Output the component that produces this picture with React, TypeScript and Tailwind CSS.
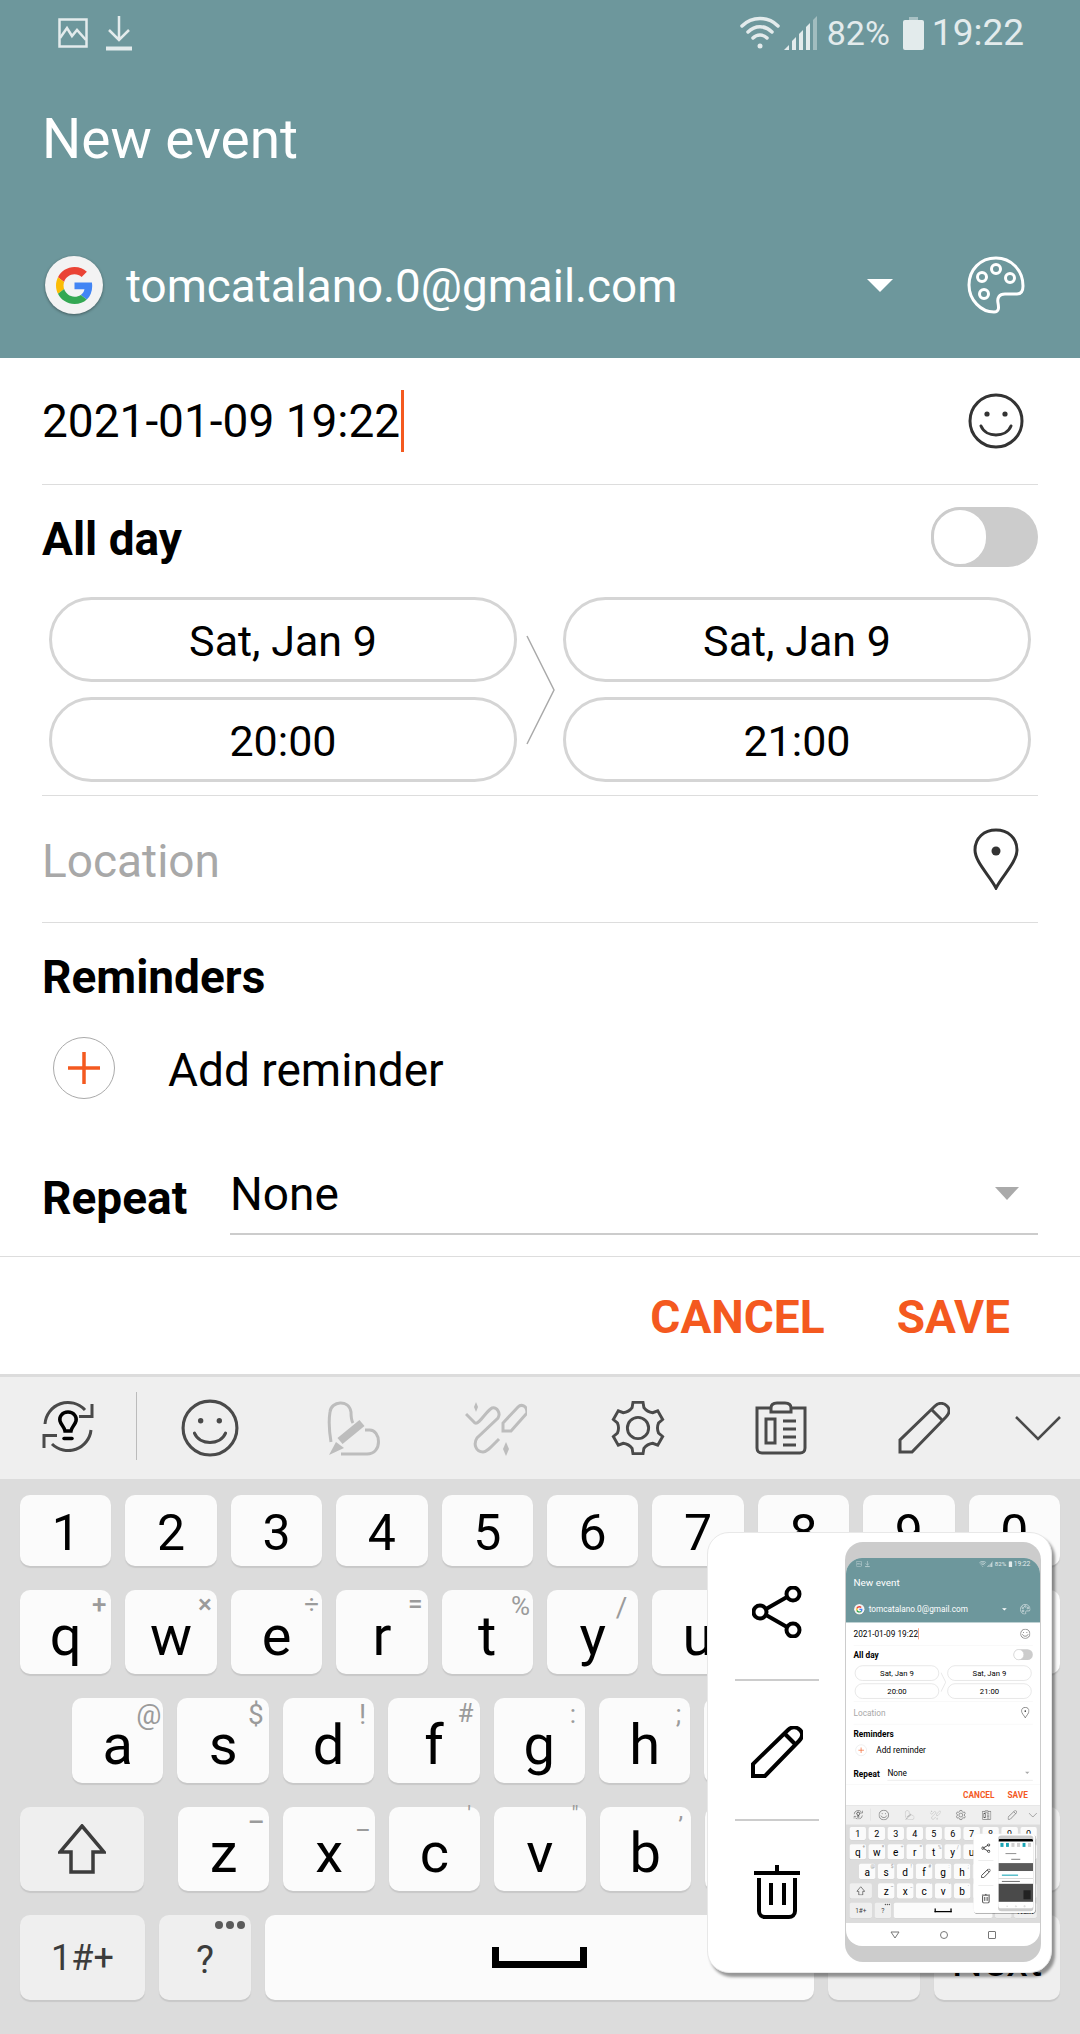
// Samsung calendar "New event" screen with the screenshot popup over the keyboard
const ORANGE = '#f4591f';

const gearPath = (() => {
  const pts: string[] = [];
  const c = 30;
  for (let i = 0; i < 6; i++) {
    const a = (i * 60 - 90) * (Math.PI / 180);
    const p = (r: number, off: number) => {
      const t = a + (off * Math.PI) / 180;
      return `${(c + r * Math.cos(t)).toFixed(1)} ${(c + r * Math.sin(t)).toFixed(1)}`;
    };
    const next = a + Math.PI / 6;
    const ctrl = `${(c + 19 * Math.cos(next)).toFixed(1)} ${(c + 19 * Math.sin(next)).toFixed(1)}`;
    pts.push(`${i === 0 ? 'M' : 'L'}${p(27, -11)} L${p(27, 11)} L${p(22, 16)} Q${ctrl} ${p(22, 44)}`);
  }
  return pts.join(' ') + ' Z';
})();

function StatusIcons() {
  return (
    <>
      <svg width="30" height="30" viewBox="0 0 30 30" fill="none" stroke="#e3ebec" strokeWidth="2.5">
        <rect x="1.5" y="1.5" width="27" height="27" />
        <path d="M2 20 L9 10 L14 18 L19 12 L28 22" />
      </svg>
      <svg width="30" height="36" viewBox="0 0 30 36" fill="none" stroke="#e3ebec" strokeWidth="2.5" className="ml-[16px]">
        <path d="M15 1 V25 M5 15 L15 25 L25 15" />
        <path d="M2 33.5 H28" strokeWidth="4" />
      </svg>
    </>
  );
}

function Wifi() {
  return (
    <svg width="40" height="36" viewBox="0 0 40 36" fill="none" stroke="#e3ebec" strokeWidth="3.5" strokeLinecap="round">
      <path d="M2 11 C12 1 28 1 38 11" />
      <path d="M8 17 C15 10 25 10 32 17" />
      <path d="M13 23 C17 19 23 19 27 23" />
      <circle cx="20" cy="31" r="2.5" fill="#e3ebec" stroke="none" />
    </svg>
  );
}

function Signal() {
  return (
    <svg width="33" height="34" viewBox="0 0 33 34" fill="#e3ebec">
      <path d="M0 34 L5 29 V34 Z" />
      <path d="M8 25 L12 21 V34 H8 Z" />
      <path d="M15 18 L19 14 V34 H15 Z" />
      <path d="M22 11 L26 7 V34 H22 Z" />
      <path d="M29 4 L33 0 V34 H29 Z" opacity="0.45" />
    </svg>
  );
}

function Battery() {
  return (
    <svg width="21" height="33" viewBox="0 0 21 33" fill="#e3ebec">
      <path d="M6 0 H15 V3 H6 Z" opacity="0.5" />
      <rect x="0" y="3" width="21" height="30" rx="2" />
    </svg>
  );
}

function GoogleBadge() {
  return (
    <div className="flex h-[58px] w-[58px] items-center justify-center rounded-full bg-[#f3f3f3] shadow-[0_1px_3px_rgba(0,0,0,0.4)]">
      <svg width="37" height="37" viewBox="0 0 48 48">
        <path fill="#EA4335" d="M24 9.5c3.54 0 6.71 1.22 9.21 3.6l6.85-6.85C35.9 2.38 30.47 0 24 0 14.62 0 6.51 5.38 2.56 13.22l7.98 6.19C12.43 13.72 17.74 9.5 24 9.5z" />
        <path fill="#4285F4" d="M46.98 24.55c0-1.57-.15-3.09-.38-4.55H24v9.02h12.94c-.58 2.96-2.26 5.48-4.78 7.18l7.73 6c4.51-4.18 7.09-10.36 7.09-17.65z" />
        <path fill="#FBBC05" d="M10.53 28.59c-.48-1.45-.76-2.99-.76-4.59s.27-3.14.76-4.59l-7.98-6.19C.92 16.46 0 20.12 0 24c0 3.88.92 7.54 2.56 10.78l7.97-6.19z" />
        <path fill="#34A853" d="M24 48c6.48 0 11.93-2.13 15.89-5.81l-7.73-6c-2.15 1.45-4.92 2.3-8.16 2.3-6.26 0-11.57-4.22-13.47-9.91l-7.98 6.19C6.51 42.62 14.62 48 24 48z" />
      </svg>
    </div>
  );
}

function Palette() {
  return (
    <svg width="58" height="58" viewBox="0 0 58 58" fill="none" stroke="#fff" strokeWidth="3">
      <path d="M29 2 C13 2 2 14 2 29 C2 44 14 56 27 56 C32 56 32 52 31 47 C30 42 32 38 38 38 L50 38 C54 38 56 35 56 30 C56 14 44 2 29 2 Z" />
      <circle cx="15" cy="21" r="4.5" />
      <circle cx="29" cy="13" r="4.5" />
      <circle cx="43" cy="22" r="4.5" />
      <circle cx="17" cy="38" r="4.5" />
    </svg>
  );
}

function Smile({ size, color, w }: { size: number; color: string; w: number }) {
  return (
    <svg width={size} height={size} viewBox="0 0 56 56" fill="none" stroke={color} strokeWidth={w}>
      <circle cx="28" cy="28" r="26" />
      <circle cx="19" cy="21" r="2.6" fill={color} stroke="none" />
      <circle cx="37" cy="21" r="2.6" fill={color} stroke="none" />
      <path d="M13 33 C18 45 38 45 43 33" strokeLinecap="round" />
    </svg>
  );
}

function Pin() {
  return (
    <svg width="46" height="62" viewBox="0 0 46 62" fill="none" stroke="#333" strokeWidth="3">
      <path d="M23 60 C17 48 2 34 2 22 C2 10 11 2 23 2 C35 2 44 10 44 22 C44 34 29 48 23 60 Z" />
      <circle cx="23" cy="23" r="4.5" fill="#333" stroke="none" />
    </svg>
  );
}

function SyncBulb() {
  return (
    <svg width="52" height="52" viewBox="0 0 52 52" fill="none" stroke="#4a4a4a" strokeWidth="3">
      <path d="M3 24 A23 23 0 0 1 43 10" />
      <path d="M37 16.5 H50 V4" />
      <path d="M49 30 A23 23 0 0 1 10 44" />
      <path d="M15 35.5 H2 V48" />
      <path d="M26 12 C20 12 17 17 18 21 C19 25 22.5 27 23 31 H29 C29.5 27 33 25 34 21 C35 17 32 12 26 12 Z" stroke="#000" strokeWidth="3.5" />
      <path d="M22 38.5 H30" stroke="#000" strokeWidth="3.5" strokeLinecap="round" />
    </svg>
  );
}

function Handwriting() {
  return (
    <svg width="54" height="56" viewBox="0 0 54 56" fill="none" stroke="#bdbdbd" strokeWidth="3">
      <path d="M4 42 C2 30 2 18 3 12 C4 1 22 -1 24 12 C24 16 24 20 26 23" />
      <path d="M38 30 H42 C54 29 56 54 40 54 H14" />
      <path d="M13 41 L35 23" strokeWidth="8" />
      <path d="M2 55 L9 42 L17 48 Z" fill="#bdbdbd" stroke="none" />
    </svg>
  );
}

function Stickers() {
  return (
    <svg width="62" height="56" viewBox="0 0 62 56" fill="none" stroke="#bdbdbd" strokeWidth="3">
      <path d="M1 14 L10 23 C14 25 22 10 27 8 C32 7 36 13 33 18 L12 38 C8 44 11 52 18 52 C22 52 26 47 34 39" />
      <path d="M38 31 H46 L62 13 C62 5 56 4 53 7 L38 23 Z" />
      <path d="M11 2 L13 7 L11 12 L9 7 Z" fill="#bdbdbd" stroke="none" />
      <path d="M41 42 L44 49 L41 56 L38 49 Z" fill="#bdbdbd" stroke="none" />
    </svg>
  );
}

function Gear() {
  return (
    <svg width="58" height="58" viewBox="0 0 60 60" fill="none" stroke="#4a4a4a" strokeWidth="3">
      <path d={gearPath} />
      <circle cx="30" cy="30" r="11" />
    </svg>
  );
}

function Clipboard() {
  return (
    <svg width="52" height="54" viewBox="0 0 52 54" fill="none" stroke="#4a4a4a" strokeWidth="3">
      <path d="M15 7 H2 V47 C2 50 4 52 7 52 H45 C48 52 50 50 50 47 V7 H37" />
      <path d="M16 11 V7 C16 3 19 2 22 2 H30 C33 2 36 3 36 7 V11 Z" />
      <rect x="11" y="18" width="9" height="24" />
      <path d="M28 20 H41 M28 28 H41 M28 36 H41 M28 44 H41" strokeWidth="3" />
    </svg>
  );
}

function Pencil({ size, color, w }: { size: number; color: string; w: number }) {
  return (
    <svg width={size} height={size} viewBox="0 0 52 52" fill="none" stroke={color} strokeWidth={w}>
      <path d="M2 50 V38 L37 4 C41 0 46 1 49 4 C52 7 52 11 48 15 L14 50 Z" />
      <path d="M34 8 L44 18" />
    </svg>
  );
}

function Share() {
  return (
    <svg width="50" height="52" viewBox="0 0 50 52" fill="none" stroke="#000" strokeWidth="4">
      <circle cx="8" cy="26" r="6.5" />
      <circle cx="41" cy="8" r="6.5" />
      <circle cx="41" cy="44" r="6.5" />
      <path d="M14 23 L35 11 M14 29 L35 41" />
    </svg>
  );
}

function Trash() {
  return (
    <svg width="46" height="54" viewBox="0 0 46 54" fill="none" stroke="#000" strokeWidth="4">
      <path d="M0 8 H46 M23 0 V8" />
      <path d="M5 13 V46 C5 50 8 52 11 52 H35 C38 52 41 50 41 46 V13" />
      <path d="M17 18 V40 M30 18 V40" />
    </svg>
  );
}

type Hint = { h: string; c: string };
const Q_ROW: [string, Hint?][] = [
  ['q', { h: '+', c: 'right-[5px] top-[-1px] text-[26px] font-medium' }],
  ['w', { h: '×', c: 'right-[5px] top-[-1px] text-[26px] font-medium' }],
  ['e', { h: '÷', c: 'right-[3px] top-[-1px] text-[26px]' }],
  ['r', { h: '=', c: 'right-[5px] top-[-1px] text-[26px] font-medium' }],
  ['t', { h: '%', c: 'right-[3px] top-[1px] text-[26px]' }],
  ['y', { h: '/', c: 'right-[11px] top-[1px] text-[28px]' }],
  ['u'], ['i'], ['o'], ['p'],
];
const A_ROW: [string, Hint?][] = [
  ['a', { h: '@', c: 'right-[2px] top-[0px] text-[28px]' }],
  ['s', { h: '$', c: 'right-[5px] top-[0px] text-[28px]' }],
  ['d', { h: '!', c: 'right-[8px] top-[0px] text-[28px]' }],
  ['f', { h: '#', c: 'right-[6px] top-[0px] text-[26px]' }],
  ['g', { h: ':', c: 'right-[9px] top-[1px] text-[26px]' }],
  ['h', { h: ';', c: 'right-[9px] top-[1px] text-[26px]' }],
  ['j'], ['k'], ['l'],
];
const Z_ROW: [string, Hint?][] = [
  ['z', { h: '–', c: 'right-[5px] top-[0px] text-[26px] font-medium' }],
  ['x', { h: '_', c: 'right-[6px] top-[-2px] text-[26px]' }],
  ['c', { h: "'", c: 'right-[9px] top-[-6px] text-[22px]' }],
  ['v', { h: '"', c: 'right-[7px] top-[-6px] text-[22px]' }],
  ['b', { h: '’', c: 'right-[8px] top-[5px] text-[24px]' }],
  ['n'], ['m'],
];

function Key({ label, hint, className }: { label: string; hint?: Hint; className?: string }) {
  return (
    <div className={`relative flex items-end justify-center rounded-[10px] bg-[#fbfbfb] pb-[10px] text-[56px] leading-none text-black shadow-[0_2px_1px_#c8c8c8] ${className ?? 'w-[91.4px]'}`}>
      {label}
      {hint && <span className={`absolute leading-[1.2] text-[#9b9b9b] ${hint.c}`}>{hint.h}</span>}
    </div>
  );
}

function Keyboard() {
  return (
    <div className="flex h-[555px] flex-col gap-[24px] bg-[#dcdcdc] px-[20px] pt-[16px]">
      <div className="flex h-[71px] gap-[14px]">
        {'1234567890'.split('').map((d) => (
          <div key={d} className="flex w-[91.4px] items-center justify-center rounded-[10px] bg-[#fbfbfb] pt-[5px] text-[50px] leading-none text-black shadow-[0_2px_1px_#c8c8c8]">
            {d}
          </div>
        ))}
      </div>
      <div className="flex h-[84px] gap-[14px]">
        {Q_ROW.map(([l, h]) => <Key key={l} label={l} hint={h} />)}
      </div>
      <div className="flex h-[85px] gap-[14px] pl-[52px]">
        {A_ROW.map(([l, h]) => <Key key={l} label={l} hint={h} />)}
      </div>
      <div className="flex h-[84px] gap-[14px]">
        <div className="mr-[20px] flex w-[124px] items-center justify-center rounded-[10px] bg-[#efefef] shadow-[0_2px_1px_#c8c8c8]">
          <svg width="48" height="50" viewBox="0 0 48 50" fill="none" stroke="#3c3c3c" strokeWidth="3.5">
            <path d="M24 2 L46 28 H35 V48 H13 V28 H2 Z" />
          </svg>
        </div>
        {Z_ROW.map(([l, h]) => <Key key={l} label={l} hint={h} />)}
        <div className="flex-1 rounded-[10px] bg-[#efefef] shadow-[0_2px_1px_#c8c8c8]" />
      </div>
      <div className="flex h-[85px] gap-[14px]">
        <div className="flex w-[125px] items-center justify-center rounded-[10px] bg-[#efefef] text-[36px] text-[#3c3c3c] shadow-[0_2px_1px_#c8c8c8]">1#+</div>
        <div className="relative flex w-[92px] items-center justify-center rounded-[10px] bg-[#efefef] pt-[6px] text-[38px] text-[#3c3c3c] shadow-[0_2px_1px_#c8c8c8]">
          ?
          <span className="absolute right-[6px] top-[6px] flex gap-[3px]">
            <i className="h-[8px] w-[8px] rounded-full bg-[#5c5c5c]" />
            <i className="h-[8px] w-[8px] rounded-full bg-[#5c5c5c]" />
            <i className="h-[8px] w-[8px] rounded-full bg-[#5c5c5c]" />
          </span>
        </div>
        <div className="flex w-[549px] items-center justify-center rounded-[10px] bg-[#fbfbfb] shadow-[0_2px_1px_#c8c8c8]">
          <div className="h-[21px] w-[95px] border-x-[7px] border-b-[7px] border-black" />
        </div>
        <div className="flex w-[92px] items-center justify-center rounded-[10px] bg-[#efefef] text-[40px] text-black shadow-[0_2px_1px_#c8c8c8]">.</div>
        <div className="flex flex-1 items-center justify-center rounded-[10px] bg-[#efefef] pt-[6px] text-[44px] text-black shadow-[0_2px_1px_#c8c8c8]">Next</div>
      </div>
    </div>
  );
}

// The screenshot inside the inner thumbnail is another app, only blocks are readable at this size
function TinyShot() {
  return (
    <div className="h-[365px] overflow-hidden bg-white">
      <div className="h-[17px] bg-black" />
      <div className="flex gap-[14px] px-[12px] pt-[8px]">
        <i className="h-[22px] w-[22px] bg-[#19a5b5]" />
        <i className="h-[22px] w-[22px] bg-[#19a5b5]" />
        <i className="h-[22px] w-[22px] bg-[#d0d0d0]" />
        <i className="h-[22px] w-[22px] bg-[#d0d0d0]" />
        <i className="h-[22px] w-[22px] bg-[#19a5b5]" />
        <i className="h-[22px] w-[22px] bg-[#d0d0d0]" />
      </div>
      <div className="ml-[40px] mt-[34px] h-[6px] w-[60px] bg-[#999]" />
      <div className="mx-auto mt-[26px] h-[6px] w-[50px] bg-[#888]" />
      <div className="mt-[18px] h-[44px] bg-[#5a5a5a]" />
      <div className="ml-[20px] mt-[20px] h-[6px] w-[90px] bg-[#19a5b5]" />
      <div className="mt-[14px] h-[3px] bg-[#bbb]" />
      <div className="ml-[20px] mt-[12px] h-[6px] w-[100px] bg-[#777]" />
      <div className="mt-[10px] h-[100px] bg-[#4a4a4a] pl-[140px] pt-[36px]">
        <div className="h-[50px] w-[40px] bg-[#222]" />
      </div>
    </div>
  );
}

function Popup({ depth }: { depth: number }) {
  return (
    <div className="absolute left-[707px] top-[1532px] flex h-[441px] w-[345px] rounded-[22px] border border-[#e8e8e8] bg-white shadow-[3px_4px_3px_rgba(0,0,0,0.4)]">
      <div className="flex w-[137px] flex-col items-center pt-[8px]">
        <div className="flex h-[140px] w-[84px] items-center justify-center border-b-2 border-[#cccccc] pt-[4px]"><Share /></div>
        <div className="flex h-[140px] w-[84px] items-center justify-center border-b-2 border-[#cccccc] pt-[4px]"><Pencil size={52} color="#000" w={4} /></div>
        <div className="flex h-[140px] w-[84px] items-center justify-center pt-[2px]"><Trash /></div>
      </div>
      <div className="mt-[9px] h-[420px] w-[196px] overflow-hidden rounded-[18px] bg-[#cccccc] px-[1px] pt-[16px]">
        <div className="h-[388px] w-[194px] overflow-hidden rounded-[16px] bg-white">
          {depth === 0 ? (
            <div className="h-[365px] w-[194px] overflow-hidden">
              <div className="origin-top-left scale-[0.18]">
                <Screen depth={1} />
              </div>
            </div>
          ) : (
            <TinyShot />
          )}
          <div className="flex h-[23px] items-center justify-center gap-[40px]">
            <svg width="10" height="8" viewBox="0 0 10 8" fill="none" stroke="#777"><path d="M1 1 H9 L5 7 Z" /></svg>
            <i className="h-[8px] w-[8px] rounded-full border border-[#777]" />
            <i className="h-[8px] w-[8px] rounded-[1px] border border-[#777]" />
          </div>
        </div>
      </div>
    </div>
  );
}

function Pill({ label }: { label: string }) {
  return (
    <div className="flex h-[85px] items-center justify-center rounded-full border-[3px] border-[#d5d5d5] pt-[3px] text-[43px] text-black">
      {label}
    </div>
  );
}

function Screen({ depth }: { depth: number }) {
  return (
    <div className="relative flex h-[2034px] w-[1080px] flex-col overflow-hidden bg-white font-[family-name:Roboto,sans-serif] text-black">
      {/* header */}
      <div className="h-[358px] bg-[#6d979c] text-white">
        <div className="flex h-[66px] items-center pl-[58px] pr-[56px]">
          <StatusIcons />
          <div className="ml-auto flex items-center text-[#e3ebec]">
            <Wifi />
            <span className="ml-[4px]"><Signal /></span>
            <span className="ml-[10px] text-[34px]">82%</span>
            <span className="ml-[13px]"><Battery /></span>
            <span className="ml-[8px] text-[37px]">19:22</span>
          </div>
        </div>
        <div className="flex h-[146px] items-center pl-[42px] text-[55px]">New event</div>
        <div className="flex h-[146px] items-center pl-[45px] pr-[55px]">
          <GoogleBadge />
          <span className="ml-[23px] pt-[4px] text-[45.8px]">tomcatalano.0@gmail.com</span>
          <span className="ml-auto mr-[74px] h-0 w-0 border-x-[13px] border-t-[13px] border-x-transparent border-t-white" />
          <Palette />
        </div>
      </div>

      {/* form */}
      <div className="h-[898px] pl-[42px] pr-[42px]">
        <div className="flex h-[127px] items-center border-b border-[#dddddd] pr-[14px]">
          <span className="text-[46px]">2021-01-09 19:22</span>
          <span className="ml-[1px] h-[62px] w-[3px] bg-[#f4591f]" />
          <span className="ml-auto"><Smile size={56} color="#333" w={3} /></span>
        </div>
        <div className="flex h-[105px] items-center justify-between">
          <span className="pt-[4px] text-[46px] font-bold">All day</span>
          <div className="mb-[2px] flex h-[60px] w-[107px] items-center rounded-full bg-[#cccccc]">
            <span className="h-[60px] w-[58px] rounded-full border-[3px] border-[#cccccc] bg-white" />
          </div>
        </div>
        <div className="mb-[13px] mt-[7px] flex px-[7px]">
          <div className="flex w-[468px] flex-col gap-[15px]">
            <Pill label="Sat, Jan 9" />
            <Pill label="20:00" />
          </div>
          <div className="flex w-[46px] items-center justify-center">
            <svg width="29" height="110" viewBox="0 0 29 110" fill="none" stroke="#aaaaaa" strokeWidth="1.5">
              <path d="M1 1 L28 55 L1 109" />
            </svg>
          </div>
          <div className="flex w-[468px] flex-col gap-[15px]">
            <Pill label="Sat, Jan 9" />
            <Pill label="21:00" />
          </div>
        </div>
        <div className="flex h-[128px] items-center justify-between border-y border-[#dddddd] pr-[19px]">
          <span className="pt-[5px] text-[46px] text-[#a8a8a8]">Location</span>
          <Pin />
        </div>
        <div className="flex h-[107px] items-center pt-[2px] text-[46px] font-bold">Reminders</div>
        <div className="flex h-[76px] items-center pl-[11px]">
          <div className="flex h-[62px] w-[62px] items-center justify-center rounded-full border border-[#aaaaaa]">
            <svg width="32" height="32" viewBox="0 0 32 32" stroke={ORANGE} strokeWidth="3.5"><path d="M16 0 V32 M0 16 H32" /></svg>
          </div>
          <span className="ml-[53px] pt-[5px] text-[46px]">Add reminder</span>
        </div>
        <div className="flex h-[129px] items-end">
          <span className="mb-[2px] w-[188px] text-[46px] font-bold">Repeat</span>
          <div className="flex h-[90px] flex-1 items-center justify-between border-b-2 border-[#cccccc] pr-[19px]">
            <span className="pt-[10px] text-[46px]">None</span>
            <span className="mt-[8px] h-0 w-0 border-x-[12px] border-t-[13px] border-x-transparent border-t-[#aaaaaa]" />
          </div>
        </div>
      </div>

      {/* actions */}
      <div className="flex h-[118px] items-center justify-end gap-[72px] border-t border-[#dddddd] pr-[70px] pt-[4px] text-[46px] font-bold text-[#f4591f]">
        <span>CANCEL</span>
        <span>SAVE</span>
      </div>

      {/* keyboard toolbar */}
      <div className="relative flex h-[105px] items-center border-t-[3px] border-[#dcdcdc] bg-[#efefef]">
        <div className="mb-[4px] flex w-[137px] justify-center border-r-[1px] border-[#bbbbbb] py-[8px]"><SyncBulb /></div>
        <div className="flex w-[145px] justify-center"><Smile size={58} color="#4a4a4a" w={3} /></div>
        <div className="flex w-[143px] justify-center"><Handwriting /></div>
        <div className="flex w-[142px] justify-center"><Stickers /></div>
        <div className="flex w-[142px] justify-center"><Gear /></div>
        <div className="flex w-[143px] justify-center"><Clipboard /></div>
        <div className="flex w-[143px] justify-center"><Pencil size={52} color="#4a4a4a" w={3} /></div>
        <div className="flex flex-1 justify-center">
          <svg width="46" height="26" viewBox="0 0 46 26" fill="none" stroke="#4a4a4a" strokeWidth="2.5"><path d="M1 2 L23 24 L45 2" /></svg>
        </div>
      </div>

      <Keyboard />
      <Popup depth={depth} />
    </div>
  );
}

export default function App() {
  return <Screen depth={0} />;
}
